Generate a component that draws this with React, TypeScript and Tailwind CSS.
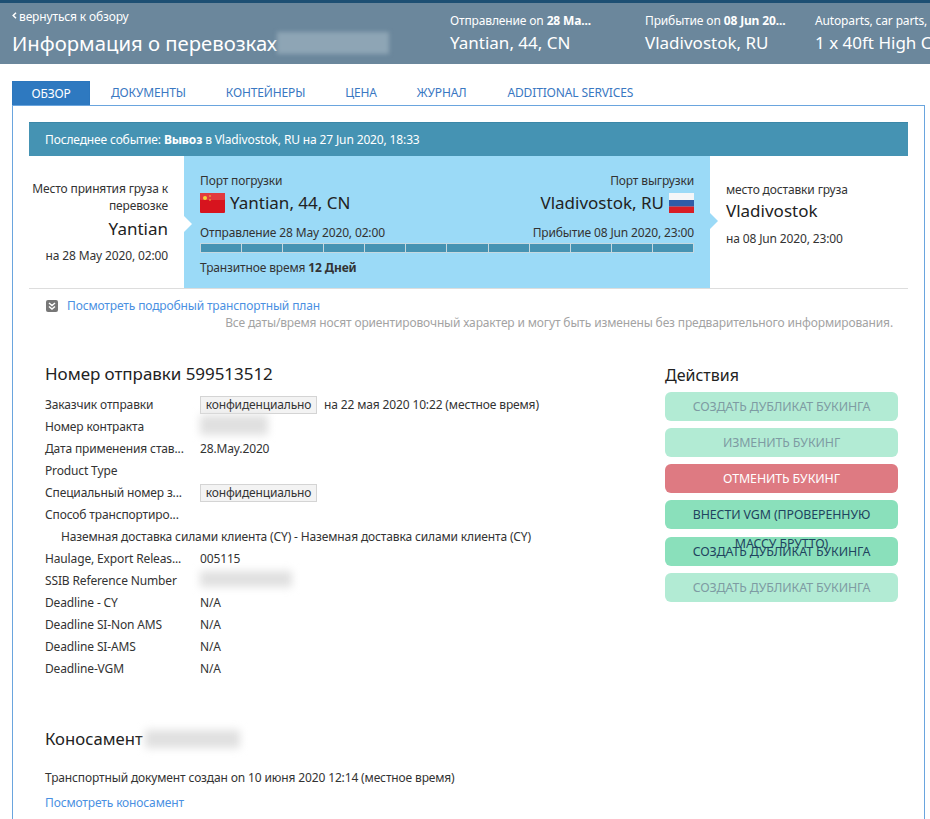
import React from "react";

const rows: [string, React.ReactNode][] = [
  ["Заказчик отправки", <span className="flex items-center gap-[7px]"><Conf /><span>на 22 мая 2020 10:22 (местное время)</span></span>],
  ["Номер контракта", <Blur w="w-[68px]" h="h-[20px]" />],
  ["Дата применения став...", "28.May.2020"],
  ["Product Type", ""],
  ["Специальный номер з...", <Conf />],
  ["Способ транспортиро...", ""],
];
const rows2: [string, React.ReactNode][] = [
  ["Haulage, Export Releas...", "005115"],
  ["SSIB Reference Number", <Blur w="w-[92px]" h="h-[16px]" />],
  ["Deadline - CY", "N/A"],
  ["Deadline SI-Non AMS", "N/A"],
  ["Deadline SI-AMS", "N/A"],
  ["Deadline-VGM", "N/A"],
];

function Conf() {
  return <span className="inline-block h-[18px] w-[117px] border border-[#d4d4d4] bg-[#f3f3f3] text-center leading-[16px]">конфиденциально</span>;
}
function Blur({ w, h }: { w: string; h: string }) {
  return <span className={`inline-block ${w} ${h} bg-[#e0e0e0] blur-[4px]`} />;
}
function Row({ k, v }: { k: string; v: React.ReactNode }) {
  return (
    <div className="flex h-[22px] items-center">
      <div className="w-[155px] shrink-0 whitespace-nowrap">{k}</div>
      <div className="whitespace-nowrap">{v}</div>
    </div>
  );
}
function Head({ a, b, c }: { a: string; b: string; c: string }) {
  return (
    <div className="whitespace-nowrap">
      <div className="leading-[18px]">{a} <b className="font-bold">{b}</b></div>
      <div className="mt-px text-[17px] leading-[24px] tracking-normal">{c}</div>
    </div>
  );
}
function Btn({ t, c }: { t: string; c: string }) {
  return <div className={`mb-[7.3px] h-[29px] rounded-[6px] px-[12px] text-center text-[12.4px] leading-[29px] tracking-[-0.1px] ${c}`}>{t}</div>;
}
const faded = "bg-[#b2ebd4] text-[#7e9ba3]";
const solid = "bg-[#8ae0bb] text-[#1f4460]";

export default function App() {
  return (
    <div className="h-[819px] w-[930px] overflow-hidden bg-white font-['Noto_Sans',sans-serif] text-[12px] tracking-[-0.14px] text-[#333]">
      <header className="flex h-[64px] overflow-hidden border-t-[3px] border-[#1d4f73] bg-[#6b879c] text-white">
        <div className="w-[438px] shrink-0 pl-[12px]">
          <div className="mt-[5px] flex h-[18px] items-center">
            <svg width="5" height="7" viewBox="0 0 5 7" className="mr-[2px] -mt-[4px]"><path d="M4 .8L1.2 3.5 4 6.2" fill="none" stroke="#fff" strokeWidth="1.5" /></svg>
            вернуться к обзору
          </div>
          <div className="mt-[3px] flex items-center text-[20.3px] leading-[28px] tracking-normal">Информация о перевозках<span className="inline-block h-[22px] w-[112px] bg-[#8ea5b5] blur-[2px]" /></div>
        </div>
        <div className="flex pt-[9px]">
          <div className="ml-[12px] w-[195px]"><Head a="Отправление on" b="28 Ma..." c="Yantian, 44, CN" /></div>
          <div className="w-[170px]"><Head a="Прибытие on" b="08 Jun 20..." c="Vladivostok, RU" /></div>
          <Head a="Autoparts, car parts, etc" b="" c="1 x 40ft High Cube" />
        </div>
      </header>

      <div className="mx-[12px] mt-[17px] w-[913px]">
        <nav className="flex h-[24px] items-stretch uppercase leading-[23px] text-[#3a78c2]">
          <div className="mr-px w-[78px] border border-b-0 border-[#2b76bd] bg-[#2e79c0] text-center text-white">Обзор</div>
          <div className="px-[20px] whitespace-nowrap">Документы</div>
          <div className="px-[20px] whitespace-nowrap">Контейнеры</div>
          <div className="px-[20px] whitespace-nowrap">Цена</div>
          <div className="px-[20px] whitespace-nowrap">Журнал</div>
          <div className="ml-px px-[20px] whitespace-nowrap">Additional Services</div>
        </nav>
        <div className="h-[760px] border border-[#6aa5de] px-[16px] pt-[16px]">
          <div className="flex h-[34px] items-center border-t border-[#3b87a8] bg-[#4593b3] pl-[16px] text-white">
            Последнее событие:&nbsp;<b className="font-bold">Вывоз</b>&nbsp;в Vladivostok, RU на 27 Jun 2020, 18:33
          </div>
          <div className="flex h-[133px] border-b border-[#dddddd]">
            <div className="w-[155px] shrink-0 pr-[16px] pt-[24px] text-right">
              <div className="leading-[17px]">Место принятия груза к перевозке</div>
              <div className="mt-[2px] text-[17px] leading-[26px] tracking-normal text-[#222]">Yantian</div>
              <div className="mt-[5px] leading-[18px]">на 28 May 2020, 02:00</div>
            </div>
            <div className="relative w-[526px] shrink-0 bg-[#9bdaf7] px-[16px] pt-[16px]">
              <span className="absolute left-0 top-[60px] h-0 w-0 border-y-[8px] border-l-[8px] border-y-transparent border-l-white" />
              <span className="absolute -right-[8px] top-[57px] h-0 w-0 border-y-[8px] border-l-[8px] border-y-transparent border-l-[#9bdaf7]" />
              <div className="flex justify-between leading-[18px]"><span>Порт погрузки</span><span>Порт выгрузки</span></div>
              <div className="flex h-[26px] items-center justify-between text-[17px] tracking-normal text-[#222]">
                <span className="flex items-center gap-[5px]">
                  <svg width="25" height="20" viewBox="0 0 25 20"><rect width="25" height="20" rx="1" fill="#d7141e" /><rect width="25" height="7" rx="1" fill="#e23a3e" /><circle cx="5" cy="5" r="2" fill="#f5d23a" /><circle cx="10" cy="3" r=".8" fill="#f5d23a" /><circle cx="10" cy="7" r=".8" fill="#f5d23a" /></svg>
                  Yantian, 44, CN
                </span>
                <span className="flex items-center gap-[5px]">
                  Vladivostok, RU
                  <svg width="25" height="20" viewBox="0 0 25 20"><rect width="25" height="7" fill="#f4f6f8" /><rect y="7" width="25" height="6.5" fill="#2f5ca8" /><rect y="13.5" width="25" height="6.5" fill="#d81e26" /></svg>
                </span>
              </div>
              <div className="mt-[8px] flex justify-between leading-[18px]"><span>Отправление 28 May 2020, 02:00</span><span>Прибытие 08 Jun 2020, 23:00</span></div>
              <div className="mt-[1px] grid h-[10px] grid-cols-12 gap-px bg-[#c4d8e0] p-px">
                {Array.from({ length: 12 }).map((_, i) => <span key={i} className="bg-[#4593b3]" />)}
              </div>
              <div className="mt-[6px] leading-[18px]">Транзитное время <b className="font-bold">12 Дней</b></div>
            </div>
            <div className="pl-[16px] pt-[25px]">
              <div className="leading-[18px]">место доставки груза</div>
              <div className="-mt-px text-[17px] leading-[26px] tracking-normal text-[#222]">Vladivostok</div>
              <div className="mt-[6px] leading-[18px]">на 08 Jun 2020, 23:00</div>
            </div>
          </div>

          <div className="mt-[8px] flex h-[18px] items-center pl-[17px] text-[#4a90e2]">
            <svg width="12" height="12" viewBox="0 0 12 12" className="mr-[9px]"><rect width="12" height="12" rx="2" fill="#777" /><path d="M3 3l3 2.5L9 3M3 6.5L6 9l3-2.5" fill="none" stroke="#fff" strokeWidth="1.5" /></svg>
            Посмотреть подробный транспортный план
          </div>
          <div className="-mt-px pr-[15px] text-right leading-[18px] text-[#a3a3a3]">Все даты/время носят ориентировочный характер и могут быть изменены без предварительного информирования.</div>

          <div className="mt-[30px] flex">
            <div className="w-[636px] shrink-0 pl-[16px]">
              <h2 className="text-[17px] leading-[24px] tracking-[-0.05px] text-[#222]">Номер отправки 599513512</h2>
              <div className="mt-[8px]">
                {rows.map(([k, v], i) => <Row key={i} k={k} v={v} />)}
                <div className="flex h-[22px] items-center pl-[16px] whitespace-nowrap">Наземная доставка силами клиента (CY) - Наземная доставка силами клиента (CY)</div>
                {rows2.map(([k, v], i) => <Row key={i} k={k} v={v} />)}
              </div>
              <h2 className="mt-[46px] flex items-center gap-[2px] text-[16.7px] leading-[26px] tracking-normal text-[#222]">Коносамент<Blur w="w-[95px]" h="h-[18px]" /></h2>
              <div className="mt-[17px] leading-[18px]">Транспортный документ создан on 10 июня 2020 12:14 (местное время)</div>
              <div className="mt-[7px] leading-[18px] text-[#4a90e2]">Посмотреть коносамент</div>
            </div>
            <div className="w-[233px] shrink-0 pt-px">
              <h2 className="text-[16px] leading-[24px] tracking-normal text-[#222]">Действия</h2>
              <div className="mt-[4.5px]">
                <Btn t="СОЗДАТЬ ДУБЛИКАТ БУКИНГА" c={faded} />
                <Btn t="ИЗМЕНИТЬ БУКИНГ" c={faded} />
                <Btn t="ОТМЕНИТЬ БУКИНГ" c="bg-[#de7a82] text-white" />
                <Btn t="ВНЕСТИ VGM (ПРОВЕРЕННУЮ МАССУ БРУТТО)" c={solid} />
                <Btn t="СОЗДАТЬ ДУБЛИКАТ БУКИНГА" c={solid} />
                <Btn t="СОЗДАТЬ ДУБЛИКАТ БУКИНГА" c={faded} />
              </div>
            </div>
          </div>
        </div>
      </div>
    </div>
  );
}
